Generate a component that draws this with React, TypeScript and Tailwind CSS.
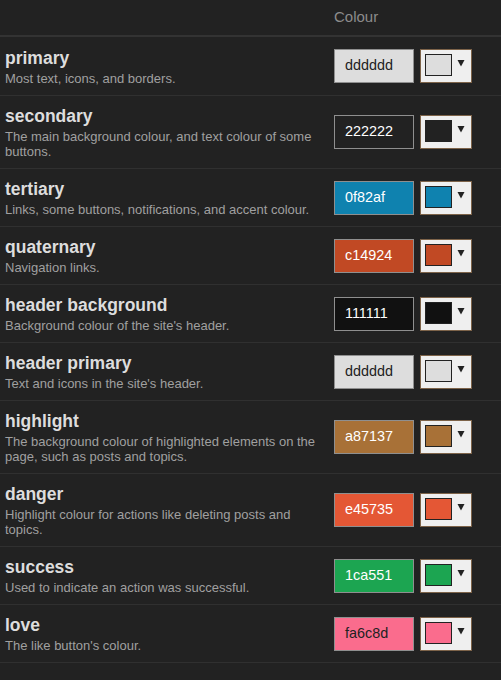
const colours = [
  { name: 'primary', desc: 'Most text, icons, and borders.', hex: 'dddddd', dark: true },
  { name: 'secondary', desc: 'The main background colour, and text colour of some buttons.', hex: '222222', dark: false },
  { name: 'tertiary', desc: 'Links, some buttons, notifications, and accent colour.', hex: '0f82af', dark: false },
  { name: 'quaternary', desc: 'Navigation links.', hex: 'c14924', dark: false },
  { name: 'header background', desc: "Background colour of the site's header.", hex: '111111', dark: false },
  { name: 'header primary', desc: "Text and icons in the site's header.", hex: 'dddddd', dark: true },
  { name: 'highlight', desc: 'The background colour of highlighted elements on the page, such as posts and topics.', hex: 'a87137', dark: false },
  { name: 'danger', desc: 'Highlight colour for actions like deleting posts and topics.', hex: 'e45735', dark: false },
  { name: 'success', desc: 'Used to indicate an action was successful.', hex: '1ca551', dark: false },
  { name: 'love', desc: "The like button's colour.", hex: 'fa6c8d', dark: true },
];

function ColourRow({ name, desc, hex, dark, first }: { name: string; desc: string; hex: string; dark: boolean; first: boolean }) {
  return (
    <div className="flex border-b border-[#303030]">
      <div className={`w-[329px] shrink-0 pl-[5px] pr-[4px] pb-[9px] ${first ? 'pt-[11px]' : 'pt-[10px]'}`}>
        <div className="text-[17.5px] leading-[20px] font-bold text-[#dddddd]">{name}</div>
        <div className="mt-[3px] text-[13px] leading-[15px] text-[#a0a0a0]">{desc}</div>
      </div>
      <div className="flex items-center gap-[6px] pl-[5px]">
        <div
          className={`w-[80px] h-[34px] border border-[#8f8f8f] pl-[10px] flex items-center text-[14.4px] ${dark ? 'text-[#222222]' : 'text-white'}`}
          style={{ backgroundColor: `#${hex}` }}
        >
          {hex}
        </div>
        <div className="w-[52px] h-[34px] border border-[#7d6349] bg-[#efefef] flex items-start pl-[4px] pt-[4px]">
          <div className="w-[27px] h-[22px] border border-[#222222]" style={{ backgroundColor: `#${hex}` }} />
          <svg width="8" height="7" viewBox="0 0 8 7" className="ml-[5px] mt-[6px]">
            <polygon points="0.5,0 7.5,0 4,6.5" fill="#222222" />
          </svg>
        </div>
      </div>
    </div>
  );
}

export default function App() {
  return (
    <div className="min-h-[680px] bg-[#222222]" style={{ fontFamily: '"Liberation Sans", Arial, sans-serif' }}>
      <div className="flex h-[37px] border-b-2 border-[#333333]">
        <div className="w-[329px] shrink-0" />
        <div className="pl-[5px] pt-[8px] text-[15px] leading-[18px] text-[#8c8c8c]">Colour</div>
      </div>
      {colours.map((c, i) => (
        <ColourRow key={c.name} {...c} first={i === 0} />
      ))}
    </div>
  );
}
